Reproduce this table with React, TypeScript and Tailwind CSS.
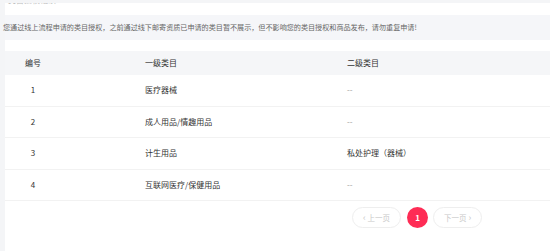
import React from 'react';

const rows = [
  { id: 1, first: '医疗器械', second: '--' },
  { id: 2, first: '成人用品/情趣用品', second: '--' },
  { id: 3, first: '计生用品', second: '私处护理（器械）' },
  { id: 4, first: '互联网医疗/保健用品', second: '--' },
];

const App = () => {
  return (
    <div
      className="w-[550px] h-[251px] overflow-hidden bg-[#f4f5f7] pt-[3px] pl-[5px]"
      style={{ fontFamily: '"Noto Sans CJK SC", "Noto Sans", sans-serif' }}
    >
      <div className="bg-white h-full">
        {/* heading, mostly scrolled out of view */}
        <div className="h-[2px] overflow-hidden">
          <div className="-mt-[7px] pl-[3px] text-[8px] leading-[8px] text-[#bbb]">类目授权记录</div>
        </div>

        {/* notice */}
        <div className="mt-[10px] h-[25px] bg-[#f5f6f9] flex items-center text-[7.1px] text-[#666] whitespace-nowrap">
          <span className="-ml-[2px]">
            您通过线上流程申请的类目授权，之前通过线下邮寄资质已申请的类目暂不展示，但不影响您的类目授权和商品发布，请勿重复申请!
          </span>
        </div>

        {/* table */}
        <div className="mt-[11px] text-[8px] text-[#333]">
          <div className="grid grid-cols-[140px_202px_1fr] h-[24px] items-center bg-[#f5f6f8]">
            <div className="pl-[12px]">
              <div className="w-[32px] text-center">编号</div>
            </div>
            <div>一级类目</div>
            <div>二级类目</div>
          </div>
          {rows.map((r) => (
            <div
              key={r.id}
              className="grid grid-cols-[140px_202px_1fr] h-[31.5px] items-center border-b border-[#f2f2f2]"
            >
              <div className="pl-[12px]">
                <div className="w-[32px] text-center">{r.id}</div>
              </div>
              <div>{r.first}</div>
              <div className={r.second === '--' ? 'text-[#999]' : ''}>{r.second}</div>
            </div>
          ))}
        </div>

        {/* pagination */}
        <div className="mt-[6px] flex items-center justify-end pr-[68px] text-[7.5px]">
          <div className="w-[49px] h-[21px] rounded-full border border-[#eeeeee] flex items-center justify-center gap-[2px] text-[#c8c8c8]">
            <span className="text-[9px] leading-none">‹</span>
            <span>上一页</span>
          </div>
          <div className="ml-[6px] w-[21px] h-[21px] rounded-full bg-[#fe2c55] text-white flex items-center justify-center text-[8px] font-bold">
            1
          </div>
          <div className="ml-[5px] w-[49px] h-[21px] rounded-full border border-[#eeeeee] flex items-center justify-center gap-[2px] text-[#c8c8c8]">
            <span>下一页</span>
            <span className="text-[9px] leading-none">›</span>
          </div>
        </div>
      </div>
    </div>
  );
};

export default App;
